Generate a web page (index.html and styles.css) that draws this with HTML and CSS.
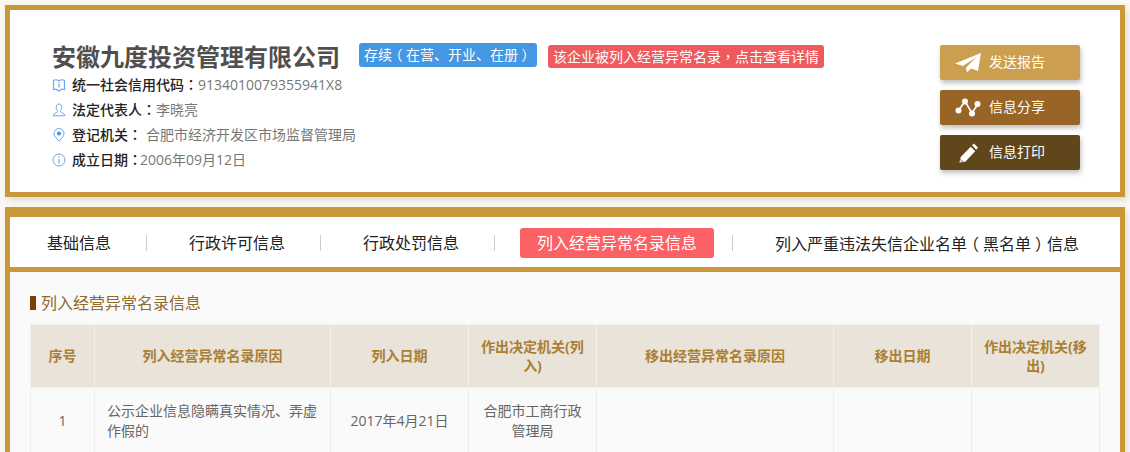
FILE: index.html
```html
<!DOCTYPE html>
<html lang="zh-CN">
<head>
<meta charset="utf-8">
<title>安徽九度投资管理有限公司</title>
<link rel="stylesheet" href="styles.css">
</head>
<body>
<section class="card head">
  <div class="info">
    <div class="title-row">
      <h1 class="name">安徽九度投资管理有限公司</h1>
      <span class="badge blue">存续<span class="par">（</span>在营、开业、在册<span class="par">）</span></span>
      <span class="badge red">该企业被列入经营异常名录<span class="cp" lang="zh-TW">，</span>点击查看详情</span>
    </div>
    <div class="line">
      <svg class="ico" viewBox="0 0 14 14"><path d="M1.5 2.5 C3 1.5 5 1.5 7 2.8 C9 1.5 11 1.5 12.5 2.5 V11.5 C11 10.8 9 11.2 7 13 C5 11.2 3 10.8 1.5 11.5 Z" fill="none" stroke="#6aa8e6" stroke-width="1.2"/><path d="M7 6 V9.5 M7 4 V5" stroke="#6aa8e6" stroke-width="1.3"/></svg>
      <b>统一社会信用代码<span class="cp" lang="zh-TW">：</span></b><span class="val">9134010079355941X8</span>
    </div>
    <div class="line">
      <svg class="ico" viewBox="0 0 14 14"><path d="M7 1 C5 1 4.2 2.6 4.2 4.5 C4.2 6 4.8 7 5.4 7.8 V8.8 C5 9.8 1.5 10 1 12.8 H13 C12.5 10 9 9.8 8.6 8.8 V7.8 C9.2 7 9.8 6 9.8 4.5 C9.8 2.6 9 1 7 1 Z" fill="none" stroke="#6aa8e6" stroke-width="1"/></svg>
      <b>法定代表人<span class="cp" lang="zh-TW">：</span></b><span class="val">李晓亮</span>
    </div>
    <div class="line">
      <svg class="ico" viewBox="0 0 14 14"><path d="M7 13.2 C4.5 10.5 2 8 2 5.5 A5 5 0 0 1 12 5.5 C12 8 9.5 10.5 7 13.2 Z" fill="none" stroke="#6aa8e6" stroke-width="1"/><circle cx="7" cy="5.5" r="2.1" fill="#4a96e2"/></svg>
      <b>登记机关<span class="cp" lang="zh-TW">：</span></b><span class="val indent">合肥市经济开发区市场监督管理局</span>
    </div>
    <div class="line">
      <svg class="ico" viewBox="0 0 14 14"><circle cx="7" cy="7" r="6" fill="none" stroke="#6aa8e6" stroke-width="1"/><path d="M7 6 V10.5 M7 3.4 V4.8" stroke="#6aa8e6" stroke-width="1.2"/></svg>
      <b>成立日期<span class="cp" lang="zh-TW">：</span></b><span class="val tight">2006年09月12日</span>
    </div>
  </div>
  <div class="actions">
    <a class="btn b1"><svg class="bico" viewBox="0 0 26 20"><path d="M0 10.5 L26 0 L23 18 L16 15.5 L12 19.5 L11 14.5 L21 4.5 L8 13 Z" fill="#fff"/></svg>发送报告</a>
    <a class="btn b2"><svg class="bico" viewBox="0 0 26 20"><path d="M3 13 L10 3.5 L17 15 L23 6" fill="none" stroke="#fff" stroke-width="1.6"/><circle cx="3.5" cy="12.5" r="3" fill="#fff"/><circle cx="10" cy="3.5" r="3" fill="#fff"/><circle cx="17" cy="15.5" r="3" fill="#fff"/><circle cx="22.5" cy="6" r="3" fill="#fff"/></svg>信息分享</a>
    <a class="btn b3"><svg class="bico" viewBox="0 0 26 22"><path d="M5 15.5 L16 4 L21 9 L10 20.5 L3.5 21.5 Z" fill="#fff"/><path d="M17.5 2.5 L19.5 0.5 L24 5 L22 7.5 Z" fill="#fff"/><path d="M4.5 18 L7.5 21" stroke="#8a7a5c" stroke-width="1.2"/></svg>信息打印</a>
  </div>
</section>

<section class="card detail">
  <nav class="tabs">
    <a class="tab">基础信息</a><i class="sep s1"></i>
    <a class="tab">行政许可信息</a><i class="sep s2"></i>
    <a class="tab">行政处罚信息</a><i class="sep s3"></i>
    <a class="tab active">列入经营异常名录信息</a><i class="sep s4"></i>
    <a class="tab">列入严重违法失信企业名单<span class="par">（</span>黑名单<span class="par">）</span>信息</a>
  </nav>
  <div class="body">
    <h2 class="sec">列入经营异常名录信息</h2>
    <table class="grid">
      <colgroup>
        <col class="c1"><col class="c2"><col class="c3"><col class="c4"><col class="c5"><col class="c6"><col class="c7">
      </colgroup>
      <thead>
        <tr>
          <th>序号</th><th>列入经营异常名录原因</th><th>列入日期</th><th>作出决定机关(列入)</th><th>移出经营异常名录原因</th><th>移出日期</th><th>作出决定机关(移出)</th>
        </tr>
      </thead>
      <tbody>
        <tr>
          <td>1</td><td class="left">公示企业信息隐瞒真实情况、弄虚作假的</td><td>2017年4月21日</td><td>合肥市工商行政管理局</td><td></td><td></td><td></td>
        </tr>
      </tbody>
    </table>
  </div>
</section>
</body>
</html>
```
FILE: styles.css
```css
* { box-sizing: border-box; }
html, body { height: 452px; overflow: hidden; }
body {
  margin: 0;
  padding: 5px 5px 0;
  background: #fbf8f2;
  font-family: "Open Sans", "Noto Sans CJK SC", sans-serif;
  font-size: 14px;
  color: #666;
}
.cp { font-family: "Noto Sans CJK TC", sans-serif; }
.par { font-family: "Noto Sans CJK SC", sans-serif; font-feature-settings: "halt"; padding: 0 .25em; }
.card { border: 5px solid #c8983a; box-shadow: 2px 3px 6px rgba(0,0,0,.12); }
.head {
  height: 192px;
  margin-bottom: 10px;
  background: #fff;
  padding: 31px 40px 0 42px;
  display: flex;
  justify-content: space-between;
}
.title-row { display: flex; align-items: center; height: 31px; }
.name { margin: 0 19px 0 0; font-size: 24px; line-height: 31px; font-weight: 700; color: #4f4f4f; }
.badge { color: #fff; font-size: 14px; line-height: 23px; height: 24px; border-radius: 3px; white-space: nowrap; padding: 0 5px; margin: -3px 11px 0 0; }
.badge.blue { background: #4596e3; width: 178px; }
.badge.red { background: #ee5a5e; width: 276px; height: 23px; line-height: 22px; margin-top: -1px; }
.line { display: flex; align-items: center; height: 25px; line-height: 25px; white-space: nowrap; font-size: 14px; }
.line b { color: #222; font-weight: 500; }
.val { color: #777; }
.ico { width: 14px; height: 14px; margin-right: 6px; flex: none; }
.indent { margin-left: 4px; }
.tight { margin-left: -2px; }
.actions { width: 140px; padding-top: 4px; display: flex; flex-direction: column; gap: 10px; }
.btn {
  height: 35px;
  border-radius: 2px;
  color: #fff;
  font-size: 14px;
  line-height: 33px;
  display: flex;
  align-items: flex-start;
  padding-left: 15px;
  box-shadow: 1px 3px 5px rgba(0,0,0,.25);
}
.b1 { background: #cb9e50; }
.b2 { background: #986527; }
.b3 { background: #60461b; }
.bico { width: 26px; height: 20px; margin: 8px 8px 0 0; flex: none; }
.detail { height: 260px; border-width: 10px 5px 0; background: #fafafa; }
.tabs {
  height: 55px;
  background: #fff;
  border-bottom: 5px solid #c8983a;
  display: flex;
  align-items: center;
  padding: 2px 0 0 37px;
  font-size: 16px;
  color: #222;
}
.tab { white-space: nowrap; line-height: 30px; height: 30px; }
.sep { width: 1px; height: 16px; background: #ccc; flex: none; }
.s1, .s2 { margin: 0 42px 0 35px; }
.s3 { margin: 0 25px 0 35px; }
.s4 { margin: 0 42px 0 18px; }
.tab.active { width: 194px; text-align: center; background: #fb6165; color: #fff; border-radius: 3px; }
.body { padding: 20px 20px 0; }
.sec {
  margin: 0 0 10px;
  display: flex;
  align-items: center;
  gap: 5px;
  font-size: 16px;
  font-weight: 400;
  line-height: 22px;
  height: 22px;
  color: #8e6a2d;
}
.sec::before { content: ""; width: 6px; height: 14px; background: #7d3f05; }
.grid { width: 1069px; table-layout: fixed; border-collapse: collapse; font-size: 14px; }
.c1 { width: 64px; } .c2 { width: 236px; } .c3 { width: 138px; } .c4 { width: 128px; }
.c5 { width: 237px; } .c6 { width: 138px; } .c7 { width: 128px; }
.grid th, .grid td { border: 1px solid #eeeeee; text-align: center; vertical-align: middle; }
.grid th { height: 63px; background: #e9e3d9; color: #aa7f33; font-weight: 700; line-height: 19px; padding: 0 10px 1px; border-color: #f0f0ee; }
.grid td { height: 68px; color: #666; line-height: 20px; padding: 0 12px 2px; }
.grid td.left { text-align: left; }
```
